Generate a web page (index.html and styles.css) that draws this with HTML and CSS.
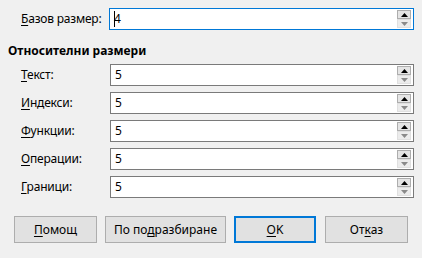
FILE: index.html
```html
<!DOCTYPE html>
<html lang="bg">
<head>
    <meta charset="UTF-8">
    <title>Размери на шрифта</title>
    <link rel="stylesheet" href="styles.css">
</head>
<body>
    <div class="dialog">
        <div class="row base">
            <label><u>Б</u>азов размер:</label>
            <div class="field focused">
                <span class="value"><span class="caret"></span>4</span>
                <div class="spin">
                    <div class="spin-btn up"><svg width="7" height="4" viewBox="0 0 7 4"><polygon points="3.5,0 7,4 0,4" /></svg></div>
                    <div class="spin-btn down"><svg width="7" height="4" viewBox="0 0 7 4"><polygon points="0,0 7,0 3.5,4" /></svg></div>
                </div>
            </div>
        </div>

        <h2>Относителни размери</h2>

        <div class="rel">
            <div class="row">
                <label><u>Т</u>екст:</label>
                <div class="field">
                    <span class="value">5</span>
                    <div class="spin">
                        <div class="spin-btn up"><svg width="7" height="4" viewBox="0 0 7 4"><polygon points="3.5,0 7,4 0,4" /></svg></div>
                        <div class="spin-btn down"><svg width="7" height="4" viewBox="0 0 7 4"><polygon points="0,0 7,0 3.5,4" /></svg></div>
                    </div>
                </div>
            </div>
            <div class="row">
                <label><u>И</u>ндекси:</label>
                <div class="field">
                    <span class="value">5</span>
                    <div class="spin">
                        <div class="spin-btn up"><svg width="7" height="4" viewBox="0 0 7 4"><polygon points="3.5,0 7,4 0,4" /></svg></div>
                        <div class="spin-btn down"><svg width="7" height="4" viewBox="0 0 7 4"><polygon points="0,0 7,0 3.5,4" /></svg></div>
                    </div>
                </div>
            </div>
            <div class="row">
                <label><u>Ф</u>ункции:</label>
                <div class="field">
                    <span class="value">5</span>
                    <div class="spin">
                        <div class="spin-btn up"><svg width="7" height="4" viewBox="0 0 7 4"><polygon points="3.5,0 7,4 0,4" /></svg></div>
                        <div class="spin-btn down"><svg width="7" height="4" viewBox="0 0 7 4"><polygon points="0,0 7,0 3.5,4" /></svg></div>
                    </div>
                </div>
            </div>
            <div class="row">
                <label><u>О</u>перации:</label>
                <div class="field">
                    <span class="value">5</span>
                    <div class="spin">
                        <div class="spin-btn up"><svg width="7" height="4" viewBox="0 0 7 4"><polygon points="3.5,0 7,4 0,4" /></svg></div>
                        <div class="spin-btn down"><svg width="7" height="4" viewBox="0 0 7 4"><polygon points="0,0 7,0 3.5,4" /></svg></div>
                    </div>
                </div>
            </div>
            <div class="row">
                <label><u>Г</u>раници:</label>
                <div class="field">
                    <span class="value">5</span>
                    <div class="spin">
                        <div class="spin-btn up"><svg width="7" height="4" viewBox="0 0 7 4"><polygon points="3.5,0 7,4 0,4" /></svg></div>
                        <div class="spin-btn down"><svg width="7" height="4" viewBox="0 0 7 4"><polygon points="0,0 7,0 3.5,4" /></svg></div>
                    </div>
                </div>
            </div>
        </div>

        <div class="buttons">
            <button class="btn help"><u>П</u>омощ</button>
            <button class="btn default">По по<u>д</u>разбиране</button>
            <button class="btn ok primary"><u>O</u>K</button>
            <button class="btn cancel">От<u>к</u>аз</button>
        </div>
    </div>
</body>
</html>
```

FILE: styles.css
```css
* {
    box-sizing: border-box;
    margin: 0;
    padding: 0;
}

body {
    font-family: "Noto Sans", "Open Sans", sans-serif;
    font-size: 12px;
    line-height: 16px;
    background-color: #f0f0f0;
    color: #000;
}

.dialog {
    padding: 8px 8px 0 8px;
}

u {
    text-decoration-thickness: 1px;
    text-underline-offset: 2px;
}

.row {
    display: flex;
    align-items: center;
}

.row label {
    width: 101px;
    padding-left: 13px;
    letter-spacing: -0.2px;
}

.rel label {
    width: 102px;
}

.field {
    flex: 1;
    display: flex;
    height: 22px;
    padding: 1px;
    border: 1px solid #7a7a7a;
    background-color: #fff;
}

.field.focused {
    border-color: #0078d7;
}

.value {
    flex: 1;
    padding-left: 3px;
    line-height: 18px;
}

.caret {
    display: inline-block;
    width: 1px;
    height: 16px;
    margin-right: -1px;
    vertical-align: -4px;
    background-color: #000;
}

.spin {
    display: flex;
    flex-direction: column;
    width: 14px;
    margin-right: 1px;
}

.spin-btn {
    height: 9px;
    display: flex;
    align-items: center;
    justify-content: center;
}

.spin-btn.up {
    background-color: #e5e5e5;
    border: 1px solid #adadad;
}

.spin-btn.up polygon {
    fill: #000;
}

.spin-btn.down {
    background-color: #ececec;
    border: 1px solid #e0e0e0;
}

.spin-btn.down polygon {
    fill: #8a8a8a;
}

h2 {
    font-size: 12px;
    font-weight: bold;
    margin: 13px 0 5px 0;
}

.rel {
    display: grid;
    gap: 6px;
}

.buttons {
    display: flex;
    gap: 8px;
    margin: 18px 0 0 6px;
}

.btn {
    height: 27px;
    width: 83px;
    font-family: inherit;
    font-size: 12px;
    color: #000;
    background-color: #e1e1e1;
    border: 1px solid #adadad;
}

.btn.default {
    width: 121px;
}

.btn.ok {
    width: 82px;
}

.btn.cancel {
    margin-left: 1px;
}

.btn.primary {
    border: 2px solid #0078d7;
}
```
